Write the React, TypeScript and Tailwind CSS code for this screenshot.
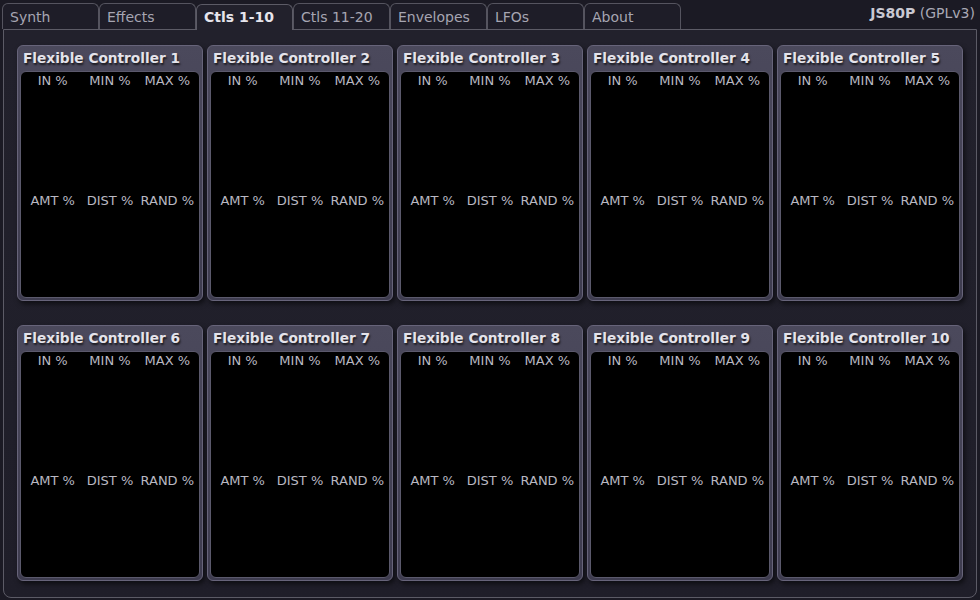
const tabs = ['Synth', 'Effects', 'Ctls 1-10', 'Ctls 11-20', 'Envelopes', 'LFOs', 'About']

function Controller({ index }: { index: number }) {
  return (
    <div className="flex flex-col h-[256px] rounded-md border border-[#67647a] bg-gradient-to-b from-[#4b495c] to-[#3e3c4f] shadow-[2px_3px_5px_rgba(0,0,0,0.55)] px-[2px] pb-[2px]">
      <div className="h-[25px] pl-[3px] pt-[3px] text-[13.7px] leading-[18px] font-bold text-[#e4e3ea] [text-shadow:1px_2px_2px_rgba(0,0,0,0.7)] whitespace-nowrap">
        Flexible Controller {index}
      </div>
      <div className="flex-1 rounded-[6px] border border-[#5b596c] bg-black px-[3px] grid grid-cols-3 grid-rows-[120px_1fr]">
        {['IN %', 'MIN %', 'MAX %', 'AMT %', 'DIST %', 'RAND %'].map((label) => (
          <div key={label} className="pt-[1px] text-center text-[13px] leading-[16px] text-[#b9b8c2] whitespace-nowrap">
            {label}
          </div>
        ))}
      </div>
    </div>
  )
}

export default function App() {
  return (
    <div className="w-[980px] h-[600px] bg-[#1b1a24] font-['DejaVu_Sans',sans-serif] overflow-hidden">
      {/* Tab bar */}
      <div className="flex items-end h-[29px] pl-[2px] pr-[5px]">
        {tabs.map((tab) => {
          const active = tab === 'Ctls 1-10'
          return (
            <div
              key={tab}
              className={
                active
                  ? 'relative z-10 w-[97px] h-[26px] -mb-px rounded-t-[6px] border border-b-0 border-[#5c5b66] bg-[#22212c] pl-[7px] pt-[4px] text-[14px] leading-[17px] font-bold text-[#e6e5ec]'
                  : 'w-[97px] h-[26px] rounded-t-[6px] border border-b-0 border-[#55545f] bg-[#1e1d28] pl-[7px] pt-[5px] text-[14px] leading-[17px] text-[#a6a5b2]'
              }
            >
              {tab}
            </div>
          )
        })}
        <div className="ml-auto self-start pt-[5px] text-[14px] leading-[17px] text-[#a9a8b4]">
          <span className="font-bold text-[#c9c8d2]">JS80P</span> (GPLv3)
        </div>
      </div>

      {/* Main panel */}
      <div className="mx-[3px] h-[569px] rounded-b-[8px] border border-[#5c5b66] bg-gradient-to-b from-[#22212c] to-[#1f1e29] px-[13px] pt-[15px]">
        <div className="grid grid-cols-5 gap-x-[4px] gap-y-[24px]">
          {Array.from({ length: 10 }, (_, i) => (
            <Controller key={i} index={i + 1} />
          ))}
        </div>
      </div>
    </div>
  )
}
